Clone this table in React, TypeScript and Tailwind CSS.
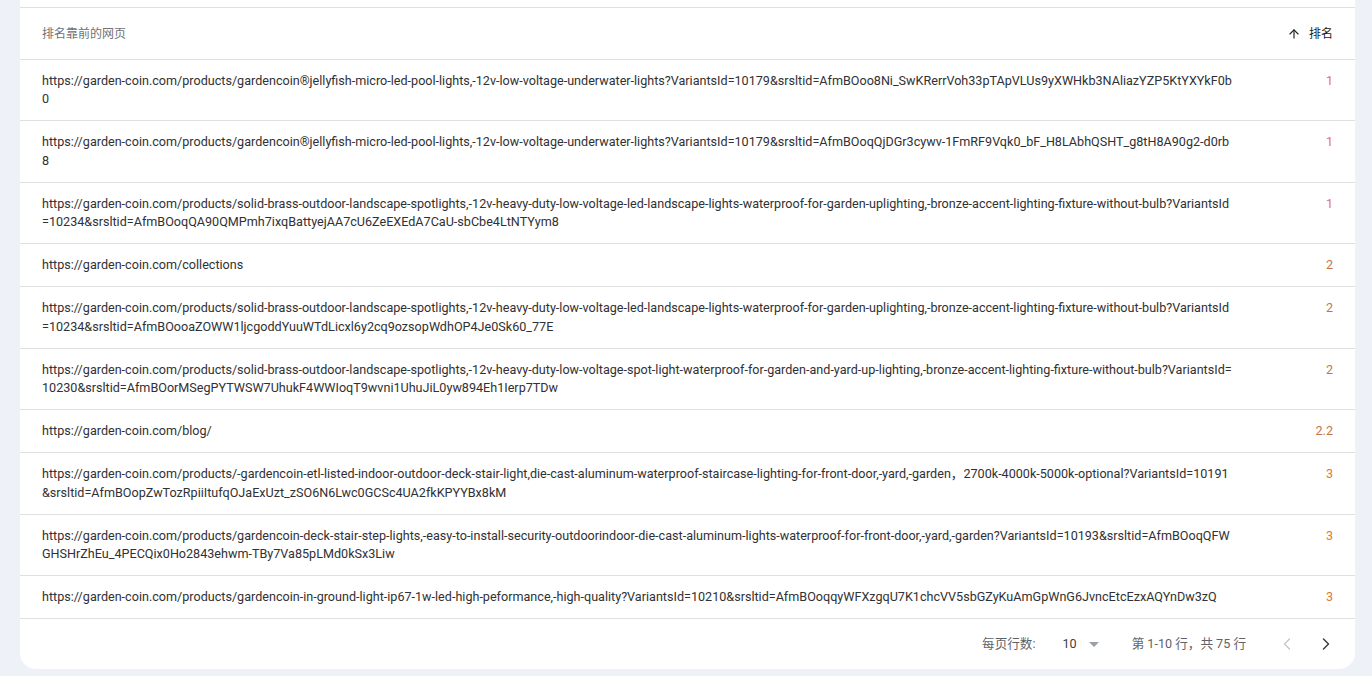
import React from 'react';
import { ArrowUp, ChevronLeft, ChevronRight } from 'lucide-react';

interface PageRow {
  url: string;
  rank: string;
}

const rows: PageRow[] = [
  {
    url: 'https://garden-coin.com/products/gardencoin®jellyfish-micro-led-pool-lights,-12v-low-voltage-underwater-lights?VariantsId=10179&srsltid=AfmBOoo8Ni_SwKRerrVoh33pTApVLUs9yXWHkb3NAliazYZP5KtYXYkF0b0',
    rank: '1',
  },
  {
    url: 'https://garden-coin.com/products/gardencoin®jellyfish-micro-led-pool-lights,-12v-low-voltage-underwater-lights?VariantsId=10179&srsltid=AfmBOoqQjDGr3cywv-1FmRF9Vqk0_bF_H8LAbhQSHT_g8tH8A90g2-d0rb8',
    rank: '1',
  },
  {
    url: 'https://garden-coin.com/products/solid-brass-outdoor-landscape-spotlights,-12v-heavy-duty-low-voltage-led-landscape-lights-waterproof-for-garden-uplighting,-bronze-accent-lighting-fixture-without-bulb?VariantsId=10234&srsltid=AfmBOoqQA90QMPmh7ixqBattyejAA7cU6ZeEXEdA7CaU-sbCbe4LtNTYym8',
    rank: '1',
  },
  { url: 'https://garden-coin.com/collections', rank: '2' },
  {
    url: 'https://garden-coin.com/products/solid-brass-outdoor-landscape-spotlights,-12v-heavy-duty-low-voltage-led-landscape-lights-waterproof-for-garden-uplighting,-bronze-accent-lighting-fixture-without-bulb?VariantsId=10234&srsltid=AfmBOooaZOWW1ljcgoddYuuWTdLicxl6y2cq9ozsopWdhOP4Je0Sk60_77E',
    rank: '2',
  },
  {
    url: 'https://garden-coin.com/products/solid-brass-outdoor-landscape-spotlights,-12v-heavy-duty-low-voltage-spot-light-waterproof-for-garden-and-yard-up-lighting,-bronze-accent-lighting-fixture-without-bulb?VariantsId=10230&srsltid=AfmBOorMSegPYTWSW7UhukF4WWIoqT9wvni1UhuJiL0yw894Eh1Ierp7TDw',
    rank: '2',
  },
  { url: 'https://garden-coin.com/blog/', rank: '2.2' },
  {
    url: 'https://garden-coin.com/products/-gardencoin-etl-listed-indoor-outdoor-deck-stair-light,die-cast-aluminum-waterproof-staircase-lighting-for-front-door,-yard,-garden，2700k-4000k-5000k-optional?VariantsId=10191&srsltid=AfmBOopZwTozRpiiItufqOJaExUzt_zSO6N6Lwc0GCSc4UA2fkKPYYBx8kM',
    rank: '3',
  },
  {
    url: 'https://garden-coin.com/products/gardencoin-deck-stair-step-lights,-easy-to-install-security-outdoorindoor-die-cast-aluminum-lights-waterproof-for-front-door,-yard,-garden?VariantsId=10193&srsltid=AfmBOoqQFWGHSHrZhEu_4PECQix0Ho2843ehwm-TBy7Va85pLMd0kSx3Liw',
    rank: '3',
  },
  {
    url: 'https://garden-coin.com/products/gardencoin-in-ground-light-ip67-1w-led-high-peformance,-high-quality?VariantsId=10210&srsltid=AfmBOoqqyWFXzgqU7K1chcVV5sbGZyKuAmGpWnG6JvncEtcEzxAQYnDw3zQ',
    rank: '3',
  },
];

const rankColor = (rank: string) => {
  if (rank === '1') return 'text-[#e3707a]';
  if (rank === '3') return 'text-[#dd7a35]';
  return 'text-[#c47547]';
};

export default function App() {
  return (
    <div className="min-h-[676px] bg-[#eef2f8] pb-[7px] pl-5 pr-[17px] font-['Roboto','Noto_Sans_CJK_SC',sans-serif] text-xs text-[#303134]">
      <div className="rounded-b-2xl bg-white">
        {/* tail of the section above */}
        <div className="h-2 border-b border-[#e0e0e0]" />

        {/* header */}
        <div className="grid h-[52px] grid-cols-[1fr_121px] items-center border-b border-[#e0e0e0]">
          <div className="pl-[22px] text-[#6f7276]">排名靠前的网页</div>
          <div className="flex items-center justify-end gap-[8px] pr-[22px] text-[#202124]">
            <ArrowUp className="h-3.5 w-3.5" strokeWidth={2} />
            <span>排名</span>
          </div>
        </div>

        {/* rows */}
        {rows.map((row, i) => (
          <div key={i} className="grid grid-cols-[1fr_121px] border-b border-[#e0e0e0] py-3 text-[12.6px] leading-[18.2px]">
            <div className="break-all pl-[22px]">{row.url}</div>
            <div className={`pr-[22px] text-right ${rankColor(row.rank)}`}>{row.rank}</div>
          </div>
        ))}

        {/* pagination */}
        <div className="flex h-[50px] items-center justify-end pr-[18px] text-[12.6px] text-[#5f6368]">
          <span>每页行数:</span>
          <div className="ml-[27px] flex items-center">
            <span className="text-[#3c4043]">10</span>
            <svg className="ml-[12px] h-[5px] w-[10px]" viewBox="0 0 10 5">
              <path d="M0 0 L10 0 L5 5 Z" fill="#9aa0a6" />
            </svg>
          </div>
          <span className="ml-[33px] text-[#5f6368]">第 1-10 行，共 75 行</span>
          <div className="ml-[30px] flex items-center gap-[17px]">
            <button className="flex h-[22px] w-[22px] items-center justify-center text-[#c4c7cc]">
              <ChevronLeft className="h-5 w-5" strokeWidth={1.6} />
            </button>
            <button className="flex h-[22px] w-[22px] items-center justify-center text-[#3c4043]">
              <ChevronRight className="h-5 w-5" strokeWidth={1.8} />
            </button>
          </div>
        </div>
      </div>
    </div>
  );
}
